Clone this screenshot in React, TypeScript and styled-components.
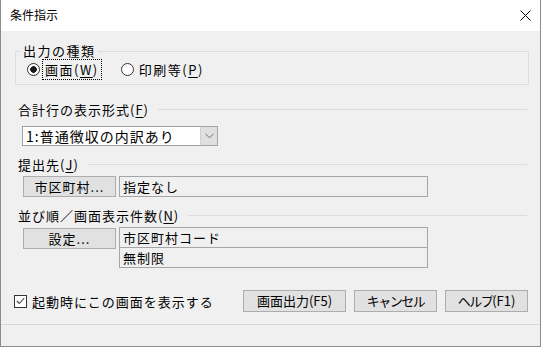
import React from 'react';
import styled, { createGlobalStyle } from 'styled-components';

const GlobalStyle = createGlobalStyle`
  html, body { margin: 0; padding: 0; background: #ffffff; }
  body { font-family: "Noto Sans CJK JP", "Noto Sans", sans-serif; color: #000; }
  * { box-sizing: border-box; }
`;

const Window = styled.div`
  width: 541px;
  height: 347px;
  display: flex;
  flex-direction: column;
  background: #f0f0f0;
  border: 1px solid #8c8c8c;
  border-top: none;
`;

const TitleBar = styled.div`
  height: 31px;
  flex: none;
  display: flex;
  align-items: center;
  justify-content: space-between;
  padding: 0 9px 1px 9px;
  background: #ffffff;
  font-size: 12px;
  line-height: 16px;
`;

const Main = styled.div`
  flex: 1;
  display: flex;
  flex-direction: column;
  padding: 0 11px 0 14px;
  font-size: 13px;
  letter-spacing: 1px;
`;

const StatusArea = styled.div`
  height: 22px;
  flex: none;
  border-top: 1px solid #d8d8d8;
`;

const Group = styled.fieldset`
  margin: 12px 0 0;
  padding: 0 0 4px 0;
  border: 1px solid #dcdcdc;
  min-width: 0;
`;

const GroupLegend = styled.legend`
  margin-left: 5px;
  padding: 0 2px;
  line-height: 16px;
  letter-spacing: 1.5px;
`;

const RadioRow = styled.div`
  display: flex;
  align-items: center;
  height: 21px;
  padding-left: 11px;
`;

const RadioItem = styled.label`
  display: flex;
  align-items: center;
  & + & { margin-left: 19px; }
`;

const RadioCircle = styled.span<{ $checked?: boolean }>`
  width: 13px;
  height: 13px;
  border-radius: 50%;
  border: 1px solid #333;
  background: ${p => p.$checked
    ? 'radial-gradient(circle, #1a1a1a 0 3px, #ffffff 3.6px)'
    : '#ffffff'};
`;

const RadioText = styled.span<{ $focused?: boolean }>`
  margin-left: 2px;
  padding: 0 2px;
  line-height: 19px;
  letter-spacing: 1.5px;
  border: 1px ${p => (p.$focused ? 'dotted #000' : 'solid transparent')};
`;

const U = styled.span`
  text-decoration: underline;
  text-underline-offset: 2px;
`;

const SectionHead = styled.div<{ $top: number }>`
  display: flex;
  align-items: center;
  height: 18px;
  line-height: 18px;
  margin: ${p => p.$top}px 2px 0 3px;
  &::after {
    content: '';
    flex: 1;
    height: 1px;
    margin: 0 0 2px 9px;
    background: #dcdcdc;
  }
`;

const Select = styled.div`
  display: flex;
  width: 196px;
  height: 20px;
  margin: 7px 0 0 7px;
  border: 1px solid #a2a2a2;
  background: #ffffff;
`;

const SelectText = styled.div`
  flex: 1;
  padding-left: 3px;
  font-size: 14px;
  line-height: 18px;
`;

const SelectArrow = styled.div`
  width: 17px;
  display: flex;
  align-items: center;
  justify-content: center;
  background: #e0e0e0;
  border-left: 1px solid #cfcfcf;
`;

const FieldRow = styled.div<{ $top: number }>`
  display: flex;
  align-items: flex-start;
  gap: 3px;
  margin: ${p => p.$top}px 0 0 8px;
`;

const PushButton = styled.button<{ $w: number; $h?: number }>`
  width: ${p => p.$w}px;
  height: ${p => p.$h ?? 21}px;
  padding: 0;
  margin: 0;
  border: 1px solid #adadad;
  background: #e1e1e1;
  font-family: inherit;
  font-size: 13px;
  letter-spacing: ${p => (p.$h ? '0' : '1px')};
  line-height: 18px;
  color: #000;
`;

const BoxStack = styled.div`
  display: flex;
  flex-direction: column;
`;

const ReadBox = styled.div`
  width: 309px;
  height: 21px;
  padding-left: 3px;
  border: 1px solid #a5a5a5;
  line-height: 19px;
  & + & { margin-top: -1px; }
`;

const Footer = styled.div`
  display: flex;
  align-items: center;
  margin: 22px 1px 0 -1px;
`;

const CheckLabel = styled.label`
  display: flex;
  align-items: center;
  gap: 5px;
  flex: 1;
`;

const CheckBox = styled.span`
  width: 13px;
  height: 13px;
  border: 1px solid #333;
  background: #ffffff;
  display: flex;
  align-items: center;
  justify-content: center;
`;

const ButtonBar = styled.div`
  display: flex;
  gap: 8px;
`;

const ActionText = styled.span<{ $tight?: boolean }>`
  letter-spacing: ${p => (p.$tight ? '-1.5px' : '0')};
`;

export default function App() {
  return (
    <>
      <GlobalStyle />
      <Window>
        <TitleBar>
          <span>条件指示</span>
          <svg width="11" height="11" viewBox="0 0 11 11">
            <path d="M0.5 0.5 L10.5 10.5 M10.5 0.5 L0.5 10.5" stroke="#000" strokeWidth="1" />
          </svg>
        </TitleBar>
        <Main>
          <Group>
            <GroupLegend>出力の種類</GroupLegend>
            <RadioRow>
              <RadioItem>
                <RadioCircle $checked />
                <RadioText $focused>画面(<U>W</U>)</RadioText>
              </RadioItem>
              <RadioItem>
                <RadioCircle />
                <RadioText>印刷等(<U>P</U>)</RadioText>
              </RadioItem>
            </RadioRow>
          </Group>

          <SectionHead $top={16}>合計行の表示形式(<U>F</U>)</SectionHead>
          <Select>
            <SelectText>1:普通徴収の内訳あり</SelectText>
            <SelectArrow>
              <svg width="9" height="6" viewBox="0 0 9 6">
                <path d="M0.5 0.8 L4.5 4.8 L8.5 0.8" fill="none" stroke="#6d6d6d" strokeWidth="1" />
              </svg>
            </SelectArrow>
          </Select>

          <SectionHead $top={10}>提出先(<U>J</U>)</SectionHead>
          <FieldRow $top={2}>
            <PushButton $w={93}>市区町村...</PushButton>
            <ReadBox>指定なし</ReadBox>
          </FieldRow>

          <SectionHead $top={10}>並び順／画面表示件数(<U>N</U>)</SectionHead>
          <FieldRow $top={2}>
            <PushButton $w={93} style={{ marginTop: 1 }}>設定...</PushButton>
            <BoxStack>
              <ReadBox>市区町村コード</ReadBox>
              <ReadBox>無制限</ReadBox>
            </BoxStack>
          </FieldRow>

          <Footer>
            <CheckLabel>
              <CheckBox>
                <svg width="9" height="8" viewBox="0 0 9 8">
                  <path d="M0.8 4 L3.3 6.5 L8.3 1" fill="none" stroke="#444" strokeWidth="1.1" />
                </svg>
              </CheckBox>
              起動時にこの画面を表示する
            </CheckLabel>
            <ButtonBar>
              <PushButton $w={103} $h={22}><ActionText>画面出力(F5)</ActionText></PushButton>
              <PushButton $w={83} $h={22}><ActionText $tight>キャンセル</ActionText></PushButton>
              <PushButton $w={83} $h={22}><ActionText $tight>ヘルプ</ActionText><ActionText>(F1)</ActionText></PushButton>
            </ButtonBar>
          </Footer>
        </Main>
        <StatusArea />
      </Window>
    </>
  );
}
